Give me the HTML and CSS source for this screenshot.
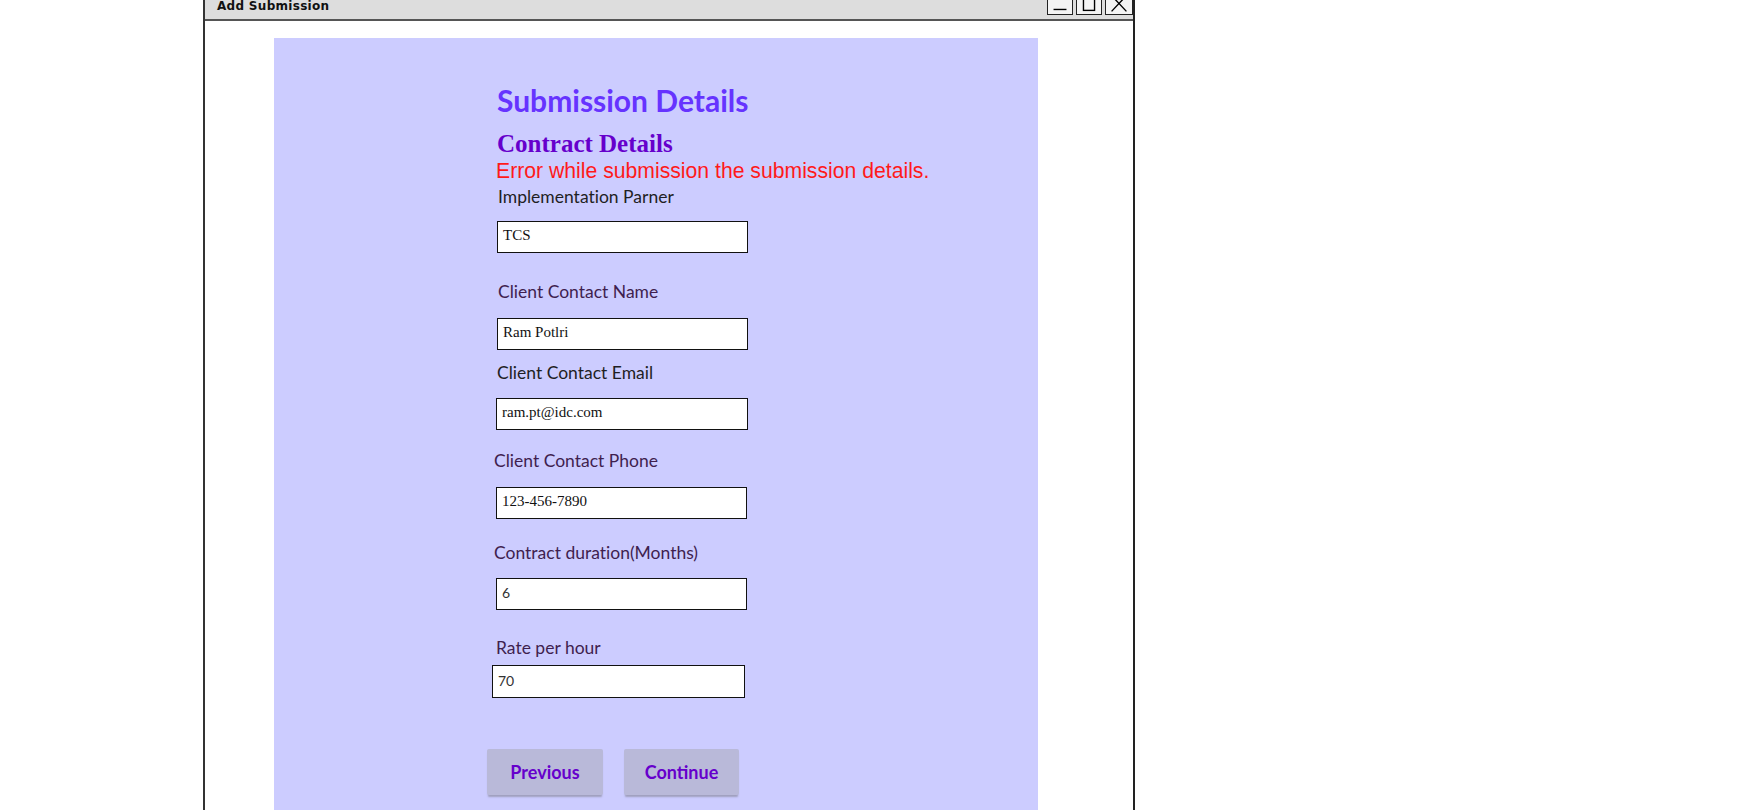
FILE: index.html
```html
<!DOCTYPE html>
<html>
<head>
<meta charset="utf-8">
<title>Add Submission</title>
<link rel="stylesheet" href="styles.css">
</head>
<body>
<div class="window">
  <div class="titlebar">
    <span class="title">Add Submission</span>
    <div class="winbtns">
      <span class="winbtn"><svg width="26" height="26" viewBox="0 0 26 26"><line x1="6" y1="20" x2="20" y2="20" stroke="#000" stroke-width="1.5"/></svg></span>
      <span class="winbtn"><svg width="26" height="26" viewBox="0 0 26 26"><rect x="7" y="6" width="12" height="15" fill="none" stroke="#000" stroke-width="1.5"/></svg></span>
      <span class="winbtn"><svg width="28" height="26" viewBox="0 0 28 26"><path d="M6 5 L22 22 M22 5 L6 22" stroke="#000" stroke-width="1.5" fill="none"/></svg></span>
    </div>
  </div>
  <div class="client">
    <div class="panel">
      <h1 class="h-main">Submission Details</h1>
      <h2 class="h-sub">Contract Details</h2>
      <div class="error">Error while submission the submission details.</div>

      <label class="lbl dark f1">Implementation Parner</label>
      <div class="inp serif i1">TCS</div>

      <label class="lbl purple f2">Client Contact Name</label>
      <div class="inp serif i2">Ram Potlri</div>

      <label class="lbl dark f3">Client Contact Email</label>
      <div class="inp serif i3">ram.pt@idc.com</div>

      <label class="lbl purple f4">Client Contact Phone</label>
      <div class="inp serif i4">123-456-7890</div>

      <label class="lbl purple f5">Contract duration(Months)</label>
      <div class="inp sans i5">6</div>

      <label class="lbl purple f6">Rate per hour</label>
      <div class="inp sans i6">70</div>

      <div class="actions">
        <button class="btn btn-prev">Previous</button>
        <button class="btn btn-cont">Continue</button>
      </div>
    </div>
  </div>
</div>
</body>
</html>
```

FILE: styles.css
```css
html, body {
  margin: 0;
  padding: 0;
  overflow: hidden;
  background: #ffffff;
}

.window {
  margin-left: 203px;
  width: 928px;
  height: 830px;
  border-left: 2px solid #333;
  border-right: 2px solid #222;
  display: flex;
  flex-direction: column;
}

.titlebar {
  height: 19px;
  background: #dddddd;
  border-bottom: 2px solid #555;
  display: flex;
  align-items: flex-end;
  justify-content: space-between;
  padding: 0 0 0 12px;
}

.title {
  font-family: "DejaVu Sans", sans-serif;
  font-weight: bold;
  font-size: 12px;
  letter-spacing: 0.3px;
  color: #111;
  align-self: center;
  margin-top: -7px;
}

.winbtns {
  display: flex;
  gap: 3px;
  margin-bottom: 4px;
}

.winbtn {
  display: flex;
  width: 26px;
  height: 26px;
  border: 1px solid #222;
  background: #f4f4f4;
  box-sizing: border-box;
}
.winbtn:last-child {
  width: 28px;
}

.client {
  flex: 1;
  padding: 17px 0 0 69px;
}

.panel {
  width: 764px;
  height: 100%;
  background: #ccccff;
  padding: 44px 0 0 223px;
  box-sizing: border-box;
  display: flex;
  flex-direction: column;
  align-items: flex-start;
  font-variant-ligatures: none;
}

.h-main {
  margin: 0;
  font-family: Lato, sans-serif;
  font-weight: bold;
  font-size: 30px;
  line-height: 36px;
  color: #6633ff;
}

.h-sub {
  margin: 12px 0 0 0;
  font-family: "Liberation Serif", serif;
  font-weight: bold;
  font-size: 25px;
  line-height: 28px;
  color: #6600cc;
}

.error {
  margin: 1px 0 0 -1px;
  font-family: "Liberation Sans", sans-serif;
  font-size: 21.2px;
  line-height: 24px;
  color: #ff1a1a;
}

.lbl {
  display: block;
  font-family: Lato, sans-serif;
  font-size: 17.5px;
  line-height: 20px;
}
.lbl.dark { color: #1f1f24; }
.lbl.purple { color: #3f1f4f; }

.inp {
  width: 251px;
  height: 32px;
  box-sizing: border-box;
  border: 1.5px solid #111;
  background: #fff;
  display: flex;
  align-items: center;
  padding: 0 0 3px 5px;
  color: #111;
}
.inp.serif {
  font-family: "Liberation Serif", serif;
  font-size: 15px;
}
.inp.sans {
  font-family: Lato, sans-serif;
  font-size: 14px;
  color: #333;
}

.f1 { margin: 4px 0 0 1px; }
.i1 { margin-top: 14px; }
.f2 { margin: 29px 0 0 1px; }
.i2 { margin-top: 16px; }
.f3 { margin: 13px 0 0 0; }
.i3 { margin: 15px 0 0 -1px; width: 252px; }
.f4 { margin: 21px 0 0 -3px; }
.i4 { margin: 16px 0 0 -1px; }
.f5 { margin: 24px 0 0 -3px; }
.i5 { margin: 15px 0 0 -1px; }
.f6 { margin: 28px 0 0 -1px; }
.i6 { margin: 7px 0 0 -5px; width: 253px; height: 33px; }

.actions {
  display: flex;
  gap: 21px;
  margin: 51px 0 0 -10px;
}

.btn {
  height: 46px;
  border: none;
  border-radius: 2px;
  background: #b9b9d9;
  box-shadow: 0 3px 2px -1px #9f9fbd;
  font-family: Lato, sans-serif;
  font-weight: bold;
  font-size: 18px;
  color: #6600cc;
  padding: 0;
  cursor: pointer;
}
.btn-prev { width: 116px; }
.btn-cont { width: 115px; }
```
